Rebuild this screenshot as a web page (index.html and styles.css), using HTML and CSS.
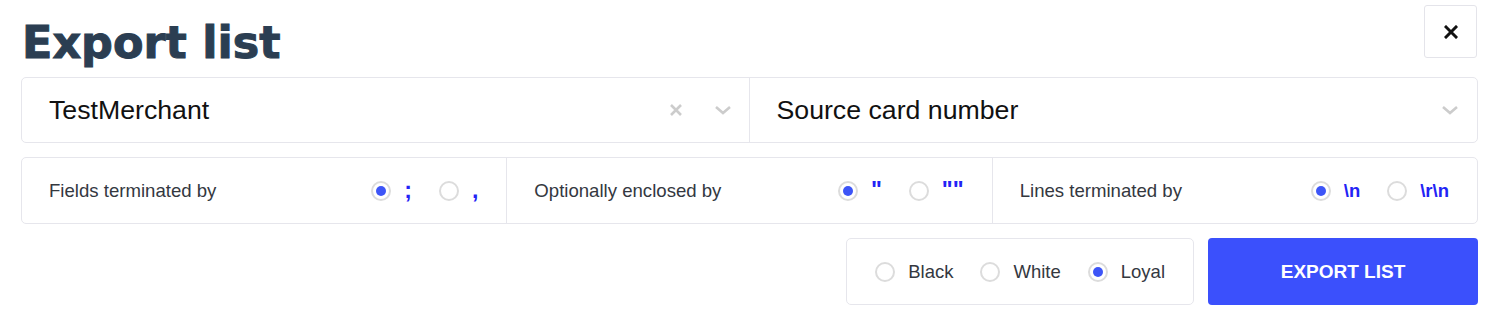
FILE: index.html
```html
<!DOCTYPE html>
<html lang="en">
<head>
<meta charset="utf-8">
<title>Export list</title>
<link rel="stylesheet" href="styles.css">
</head>
<body>
<div class="page">
  <div class="header">
    <h1 class="title">Export list</h1>
    <button class="close" type="button" aria-label="Close">
      <svg width="14" height="14" viewBox="0 0 14 14"><path d="M2 2L12 12M12 2L2 12" stroke="#111" stroke-width="3" stroke-linecap="square"/></svg>
    </button>
  </div>

  <div class="selects">
    <div class="select">
      <span class="select-value">TestMerchant</span>
      <span class="select-icons">
        <svg class="clear" width="14" height="14" viewBox="0 0 14 14"><path d="M2 2L12 12M12 2L2 12" stroke="#cccccc" stroke-width="2.6"/></svg>
        <svg class="chev" width="18" height="10" viewBox="0 0 18 10"><path d="M2 2L9 8L16 2" fill="none" stroke="#cccccc" stroke-width="2.6"/></svg>
      </span>
    </div>
    <div class="select">
      <span class="select-value">Source card number</span>
      <span class="select-icons">
        <svg class="chev" width="18" height="10" viewBox="0 0 18 10"><path d="M2 2L9 8L16 2" fill="none" stroke="#cccccc" stroke-width="2.6"/></svg>
      </span>
    </div>
  </div>

  <div class="options">
    <div class="option-cell">
      <span class="opt-label">Fields terminated by</span>
      <span class="radio-group">
        <span class="radio-item"><span class="radio checked"></span><span class="sym">;</span></span>
        <span class="radio-item"><span class="radio"></span><span class="sym">,</span></span>
      </span>
    </div>
    <div class="option-cell">
      <span class="opt-label">Optionally enclosed by</span>
      <span class="radio-group">
        <span class="radio-item"><span class="radio checked"></span><span class="sym">"</span></span>
        <span class="radio-item"><span class="radio"></span><span class="sym">""</span></span>
      </span>
    </div>
    <div class="option-cell">
      <span class="opt-label">Lines terminated by</span>
      <span class="radio-group">
        <span class="radio-item"><span class="radio checked"></span><span class="sym sym-small">\n</span></span>
        <span class="radio-item"><span class="radio"></span><span class="sym sym-small">\r\n</span></span>
      </span>
    </div>
  </div>

  <div class="actions">
    <div class="type-box">
      <span class="radio-item"><span class="radio"></span><span class="type-label">Black</span></span>
      <span class="radio-item"><span class="radio"></span><span class="type-label">White</span></span>
      <span class="radio-item"><span class="radio checked"></span><span class="type-label">Loyal</span></span>
    </div>
    <button class="export" type="button">EXPORT LIST</button>
  </div>
</div>
</body>
</html>
```

FILE: styles.css
```css
* { box-sizing: border-box; }

body {
  margin: 0;
  background: #ffffff;
  font-family: "Liberation Sans", Arial, sans-serif;
  color: #34383f;
}

.page {
  padding: 0 21px;
}

.header {
  display: flex;
  justify-content: space-between;
  align-items: flex-start;
  height: 77px;
}

.title {
  margin: 17px 0 0 1px;
  font-family: "DejaVu Sans", sans-serif;
  font-weight: bold;
  font-size: 44.5px;
  line-height: 52px;
  color: #2b3e52;
  -webkit-text-stroke: 1px #2b3e52;
}

.close {
  margin: 5px 1px 0 0;
  width: 53px;
  height: 53px;
  border: 1px solid #e4e4ea;
  border-radius: 3px;
  background: #ffffff;
  display: flex;
  align-items: center;
  justify-content: center;
  padding: 0;
}

.selects {
  display: flex;
  height: 66px;
  border: 1px solid #e6e6ec;
  border-radius: 5px;
}

.select {
  flex: 1;
  display: flex;
  align-items: center;
  justify-content: space-between;
  padding: 0 17px 0 27px;
}

.select + .select {
  border-left: 1px solid #e6e6ec;
  padding-right: 18px;
}

.select-value {
  font-size: 26.7px;
  color: #111111;
}

.select-icons {
  display: flex;
  align-items: center;
  gap: 31px;
}

.options {
  display: flex;
  margin-top: 14px;
  height: 67px;
  border: 1px solid #e6e6ec;
  border-radius: 5px;
}

.option-cell {
  flex: 1;
  display: flex;
  align-items: center;
  justify-content: space-between;
  padding: 0 28px 0 27px;
}

.option-cell + .option-cell {
  border-left: 1px solid #e6e6ec;
}

.opt-label {
  font-size: 18.6px;
}

.radio-group {
  display: flex;
  align-items: center;
  gap: 27px;
}

.radio-item {
  display: flex;
  align-items: center;
}

.radio {
  width: 20px;
  height: 20px;
  border: 2px solid #dcdcdc;
  border-radius: 50%;
  background: #ffffff;
  display: flex;
  align-items: center;
  justify-content: center;
  flex-shrink: 0;
}

.radio.checked::after {
  content: "";
  width: 10px;
  height: 10px;
  border-radius: 50%;
  background: #3d55f7;
}

.sym {
  margin-left: 13px;
  font-weight: bold;
  font-size: 23px;
  color: #2323f5;
}

.sym-small {
  font-size: 18.5px;
}

.actions {
  display: flex;
  justify-content: flex-end;
  gap: 14px;
  margin-top: 14px;
}

.type-box {
  display: flex;
  align-items: center;
  gap: 27px;
  height: 67px;
  padding: 0 28px;
  border: 1px solid #e6e6ec;
  border-radius: 5px;
}

.type-label {
  margin-left: 13px;
  font-size: 18.5px;
}

.export {
  width: 270px;
  height: 67px;
  border: none;
  border-radius: 4px;
  background: #3b50fc;
  color: #ffffff;
  font-family: "Liberation Sans", Arial, sans-serif;
  font-weight: bold;
  font-size: 19px;
  padding: 0;
}
```
